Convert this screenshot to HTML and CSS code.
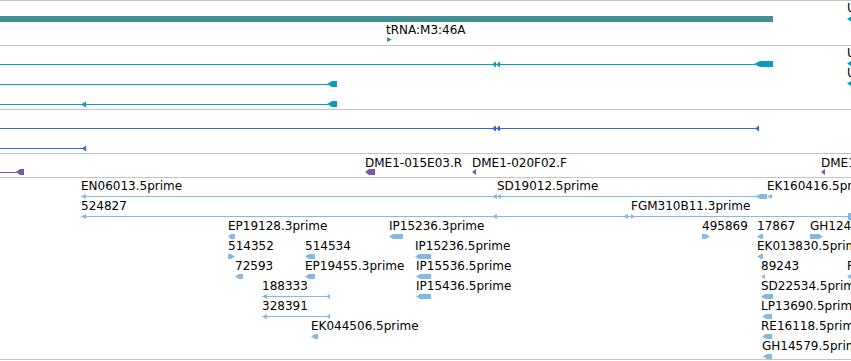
FILE: index.html
```html
<!DOCTYPE html>
<html lang="en">
<head>
  <meta charset="UTF-8">
  <title>Tracks</title>
  <link rel="stylesheet" href="styles.css">
</head>
<body>
  <div class="tracks">
    <!-- tRNA -->
    <div class="track t1">
      <svg width="851" height="44" viewBox="0 1 851 44">
        <g class="teal">
          <rect x="0" y="16" width="773" height="6"/>
          <polygon points="387,37 392,39.5 387,42"/>
        </g>
        <g class="cyan">
          <polygon points="847,19 851,16.5 851,21.5"/>
        </g>
        <text x="386" y="34">tRNA:M3:46A</text>
        <text x="847" y="12">U</text>
      </svg>
    </div>

    <!-- transcripts -->
    <div class="track t2">
      <svg width="851" height="63" viewBox="0 46 851 63">
        <g class="cyan">
          <line x1="0" y1="64.5" x2="755" y2="64.5"/>
          <polygon points="492,64.5 496,61.5 496,67.5"/>
          <polygon points="496,64.5 500,61.5 500,67.5"/>
          <polygon points="754,64 760,61 773,61 773,67 760,67"/>
          <line x1="0" y1="84.5" x2="328" y2="84.5"/>
          <polygon points="327,84 332,81 337,81 337,87 332,87"/>
          <line x1="0" y1="104.5" x2="328" y2="104.5"/>
          <polygon points="81,104.5 86,101.5 86,107.5"/>
          <polygon points="327,104 332,101 337,101 337,107 332,107"/>
          <polygon points="847,63.5 851,61 851,66"/>
          <polygon points="847,83.5 851,81 851,86"/>
        </g>
        <text x="847" y="57">U</text>
        <text x="847" y="77">U</text>
      </svg>
    </div>

    <!-- genes -->
    <div class="track t3">
      <svg width="851" height="43" viewBox="0 110 851 43">
        <g class="blue">
          <line x1="0" y1="128.5" x2="758" y2="128.5"/>
          <polygon points="492,128.5 496,125.5 496,131.5"/>
          <polygon points="496,128.5 500,125.5 500,131.5"/>
          <polygon points="755,128.5 759,125.5 759,131.5"/>
          <line x1="0" y1="148.5" x2="85" y2="148.5"/>
          <polygon points="82,148.5 86,145.5 86,151.5"/>
        </g>
      </svg>
    </div>

    <!-- BAC ends -->
    <div class="track t4">
      <svg width="851" height="23" viewBox="0 154 851 23">
        <g class="purple">
          <line x1="0" y1="172.5" x2="17" y2="172.5"/>
          <polygon points="16,172 20,169 24,169 24,175 20,175"/>
          <polygon points="365,172 369,169 375,169 375,175 369,175"/>
          <polygon points="472,172 476,169 476,175"/>
          <polygon points="821,172 825,169 825,175"/>
        </g>
        <text x="365" y="167">DME1-015E03.R</text>
        <text x="472" y="167">DME1-020F02.F</text>
        <text x="821" y="167">DME1-023A07.R</text>
      </svg>
    </div>

    <!-- ESTs -->
    <div class="track t5">
      <svg width="851" height="181" viewBox="0 178 851 181">
        <g class="light">
          <!-- row 0 -->
          <line x1="81" y1="196.5" x2="756" y2="196.5"/>
          <polygon points="81,196.5 86,194 86,199"/>
          <polygon points="492,196.5 497,194 497,199"/>
          <polygon points="497,196.5 501,194 501,199"/>
          <polygon points="755,196.5 760,194 767,194 767,199 760,199"/>
          <polygon points="767,196.5 772,194 772,199"/>
          <!-- row 1 -->
          <line x1="81" y1="216.5" x2="851" y2="216.5"/>
          <polygon points="81,216.5 86,214 86,219"/>
          <polygon points="492,216.5 497,214 497,219"/>
          <polygon points="623,216.5 628,214 628,219"/>
          <polygon points="635,216.5 631,214 631,219"/>
          <rect x="848" y="213" width="3" height="7"/>
          <!-- row 2 -->
          <polygon points="228,236.5 231,234 235,234 235,239 231,239"/>
          <polygon points="389,236.5 393,234 403,234 403,239 393,239"/>
          <polygon points="710,236.5 706,234 702,234 702,239 706,239"/>
          <polygon points="757,236.5 761,234 763,234 763,239 761,239"/>
          <polygon points="823,236.5 819,234 810,234 810,239 819,239"/>
          <!-- row 3 -->
          <polygon points="235,256.5 231,254 228,254 228,259 231,259"/>
          <polygon points="305,256.5 309,254 315,254 315,259 309,259"/>
          <polygon points="415,256.5 419,254 431,254 431,259 419,259"/>
          <polygon points="757,256.5 761,254 763,254 763,259 761,259"/>
          <!-- row 4 -->
          <polygon points="235,276.5 239,274 243,274 243,279 239,279"/>
          <polygon points="305,276.5 309,274 315,274 315,279 309,279"/>
          <polygon points="416,276.5 420,274 431,274 431,279 420,279"/>
          <polygon points="761,276.5 765,274 765,279"/>
          <polygon points="847,276.5 851,274 851,279"/>
          <!-- row 5 -->
          <line x1="262" y1="296.5" x2="330" y2="296.5"/>
          <polygon points="262,296.5 267,294 267,299"/>
          <polygon points="326,296.5 330,294 330,299"/>
          <polygon points="416,296.5 420,294 431,294 431,299 420,299"/>
          <polygon points="761,296.5 765,294 773,294 773,299 765,299"/>
          <!-- row 6 -->
          <line x1="262" y1="316.5" x2="330" y2="316.5"/>
          <polygon points="262,316.5 267,314 267,319"/>
          <polygon points="326,316.5 330,314 330,319"/>
          <polygon points="762,316.5 766,314 772,314 772,319 766,319"/>
          <!-- row 7 -->
          <polygon points="311,336.5 315,334 318,334 318,339 315,339"/>
          <polygon points="762,336.5 766,334 772,334 772,339 766,339"/>
          <!-- row 8 -->
          <polygon points="763,356.5 767,354 772,354 772,359 767,359"/>
        </g>
        <text x="81" y="190">EN06013.5prime</text>
        <text x="497" y="190">SD19012.5prime</text>
        <text x="767" y="190">EK160416.5prime</text>
        <text x="81" y="210">524827</text>
        <text x="631" y="210">FGM310B11.3prime</text>
        <text x="228" y="230">EP19128.3prime</text>
        <text x="389" y="230">IP15236.3prime</text>
        <text x="702" y="230">495869</text>
        <text x="757" y="230">17867</text>
        <text x="810" y="230">GH12447.5prime</text>
        <text x="228" y="250">514352</text>
        <text x="305" y="250">514534</text>
        <text x="415" y="250">IP15236.5prime</text>
        <text x="757" y="250">EK013830.5prime</text>
        <text x="235" y="270">72593</text>
        <text x="305" y="270">EP19455.3prime</text>
        <text x="416" y="270">IP15536.5prime</text>
        <text x="761" y="270">89243</text>
        <text x="847" y="270">FI01115.5prime</text>
        <text x="262" y="290">188333</text>
        <text x="416" y="290">IP15436.5prime</text>
        <text x="761" y="290">SD22534.5prime</text>
        <text x="262" y="310">328391</text>
        <text x="761" y="310">LP13690.5prime</text>
        <text x="311" y="330">EK044506.5prime</text>
        <text x="761" y="330">RE16118.5prime</text>
        <text x="762" y="350">GH14579.5prime</text>
      </svg>
    </div>
  </div>
</body>
</html>
```

FILE: styles.css
```css
body {
  margin: 0;
  padding: 0;
  background-color: #ffffff;
  font-family: "DejaVu Sans", sans-serif;
}
.tracks {
  width: 851px;
  border-bottom: 1px solid #c4c4c4;
}
.track {
  border-top: 1px solid #c4c4c4;
  display: flex;
}
.track svg {
  display: block;
}
.track text {
  font-family: "DejaVu Sans", sans-serif;
  font-size: 12px;
  fill: #000000;
}
.track line {
  stroke-width: 1;
  shape-rendering: crispEdges;
}
.teal rect, .teal polygon {
  fill: #428f92;
}
.cyan line {
  stroke: #0a9bbf;
}
.cyan polygon {
  fill: #0a9bbf;
}
.blue line {
  stroke: #3366cc;
}
.blue polygon {
  fill: #3366cc;
}
.purple line {
  stroke: #7b57b0;
}
.purple polygon {
  fill: #7b57b0;
}
.light line {
  stroke: #84b9e2;
}
.light polygon, .light rect {
  fill: #84b9e2;
}
```
